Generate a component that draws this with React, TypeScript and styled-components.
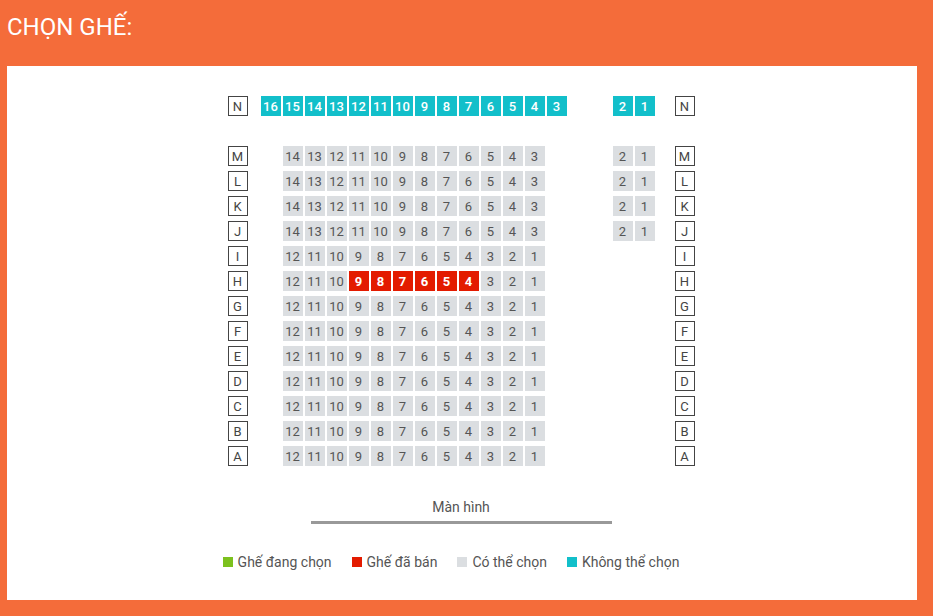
import React from 'react';
import styled, { createGlobalStyle } from 'styled-components';

type SeatStatus = 'selected' | 'sold' | 'available' | 'blocked';

const COLORS: Record<SeatStatus, string> = {
  selected: '#7cc11e',
  sold: '#e31b00',
  available: '#dbdee1',
  blocked: '#12bfca',
};

const GlobalStyle = createGlobalStyle`
  html, body {
    margin: 0;
    padding: 0;
    background: #f46c3a;
    font-family: Roboto, "Noto Sans", "Liberation Sans", sans-serif;
  }
`;

const Page = styled.div`
  width: 933px;
  height: 616px;
  background: #f46c3a;
  box-sizing: border-box;
  padding: 0 16px 16px 7px;
  display: flex;
  flex-direction: column;
`;

const Title = styled.h1`
  margin: 0;
  height: 66px;
  box-sizing: border-box;
  padding-top: 13px;
  font-size: 24px;
  line-height: 28px;
  font-weight: 400;
  color: #fff;
`;

const Panel = styled.div`
  flex: 1;
  background: #fff;
  padding: 30px 2px 0 0;
  display: flex;
  flex-direction: column;
  align-items: center;
`;

const SeatMap = styled.div`
  display: flex;
  flex-direction: column;
  gap: 5px;
`;

const Row = styled.div<{ $gapAfter?: boolean }>`
  display: flex;
  align-items: center;
  height: 20px;
  margin-bottom: ${(p) => (p.$gapAfter ? '25px' : '0')};
`;

const RowLabel = styled.div<{ $side: 'left' | 'right' }>`
  width: 20px;
  height: 20px;
  box-sizing: border-box;
  border: 1px solid #444;
  display: flex;
  align-items: center;
  justify-content: center;
  font-size: 13px;
  color: #444;
  margin-right: ${(p) => (p.$side === 'left' ? '13px' : '0')};
  margin-left: ${(p) => (p.$side === 'right' ? '20px' : '0')};
`;

const Block = styled.div<{ $cols: number; $right?: boolean }>`
  display: grid;
  grid-template-columns: repeat(${(p) => p.$cols}, 20px);
  column-gap: 2px;
  margin-left: ${(p) => (p.$right ? '46px' : '0')};
`;

const Seat = styled.div<{ $status: SeatStatus }>`
  width: 20px;
  height: 20px;
  display: flex;
  align-items: center;
  justify-content: center;
  font-size: 13px;
  background: ${(p) => COLORS[p.$status]};
  color: ${(p) => (p.$status === 'available' ? '#555' : '#fff')};
  font-weight: ${(p) => (p.$status === 'sold' ? 700 : p.$status === 'blocked' ? 500 : 400)};
`;

const EmptySlot = styled.div`
  width: 20px;
  height: 20px;
`;

const Screen = styled.div`
  margin-top: 33px;
  display: flex;
  flex-direction: column;
  align-items: center;
`;

const ScreenLabel = styled.div`
  font-size: 14px;
  line-height: 16px;
  color: #555;
`;

const ScreenLine = styled.div`
  margin-top: 6px;
  width: 301px;
  height: 3px;
  background: #999;
`;

const Legend = styled.div`
  margin-top: 28px;
  display: flex;
  align-items: center;
`;

const LegendItem = styled.div`
  display: flex;
  align-items: center;
  gap: 5px;
  margin-right: 20px;
  font-size: 14px;
  line-height: 20px;
  color: #555;
`;

const Swatch = styled.span<{ $status: SeatStatus }>`
  width: 10px;
  height: 10px;
  background: ${(p) => COLORS[p.$status]};
`;

type Cell = { n: number; status: SeatStatus } | null;

const range = (from: number, to: number) => {
  const out: number[] = [];
  for (let i = from; i >= to; i--) out.push(i);
  return out;
};

const sold = new Set([9, 8, 7, 6, 5, 4]);

interface RowData {
  label: string;
  left: Cell[];
  right: Cell[];
}

const buildRows = (): RowData[] => {
  const rows: RowData[] = [];
  rows.push({
    label: 'N',
    left: range(16, 3).map((n) => ({ n, status: 'blocked' as SeatStatus })),
    right: [2, 1].map((n) => ({ n, status: 'blocked' as SeatStatus })),
  });
  ['M', 'L', 'K', 'J'].forEach((label) => {
    rows.push({
      label,
      left: [null, ...range(14, 3).map((n) => ({ n, status: 'available' as SeatStatus })), null],
      right: [2, 1].map((n) => ({ n, status: 'available' as SeatStatus })),
    });
  });
  ['I', 'H', 'G', 'F', 'E', 'D', 'C', 'B', 'A'].forEach((label) => {
    rows.push({
      label,
      left: [
        null,
        ...range(12, 1).map((n) => ({
          n,
          status: (label === 'H' && sold.has(n) ? 'sold' : 'available') as SeatStatus,
        })),
        null,
      ],
      right: [null, null],
    });
  });
  return rows;
};

const renderCells = (cells: Cell[], key: string) =>
  cells.map((c, i) =>
    c ? (
      <Seat key={`${key}-${i}`} $status={c.status}>
        {c.n}
      </Seat>
    ) : (
      <EmptySlot key={`${key}-${i}`} />
    )
  );

const App: React.FC = () => {
  const rows = buildRows();
  return (
    <>
      <GlobalStyle />
      <Page>
        <Title>CHỌN GHẾ:</Title>
        <Panel>
          <SeatMap>
            {rows.map((r) => (
              <Row key={r.label} $gapAfter={r.label === 'N'}>
                <RowLabel $side="left">{r.label}</RowLabel>
                <Block $cols={14}>{renderCells(r.left, r.label + 'l')}</Block>
                <Block $cols={2} $right>
                  {renderCells(r.right, r.label + 'r')}
                </Block>
                <RowLabel $side="right">{r.label}</RowLabel>
              </Row>
            ))}
          </SeatMap>
          <Screen>
            <ScreenLabel>Màn hình</ScreenLabel>
            <ScreenLine />
          </Screen>
          <Legend>
            <LegendItem>
              <Swatch $status="selected" />
              Ghế đang chọn
            </LegendItem>
            <LegendItem>
              <Swatch $status="sold" />
              Ghế đã bán
            </LegendItem>
            <LegendItem>
              <Swatch $status="available" />
              Có thể chọn
            </LegendItem>
            <LegendItem>
              <Swatch $status="blocked" />
              Không thể chọn
            </LegendItem>
          </Legend>
        </Panel>
      </Page>
    </>
  );
};

export default App;
